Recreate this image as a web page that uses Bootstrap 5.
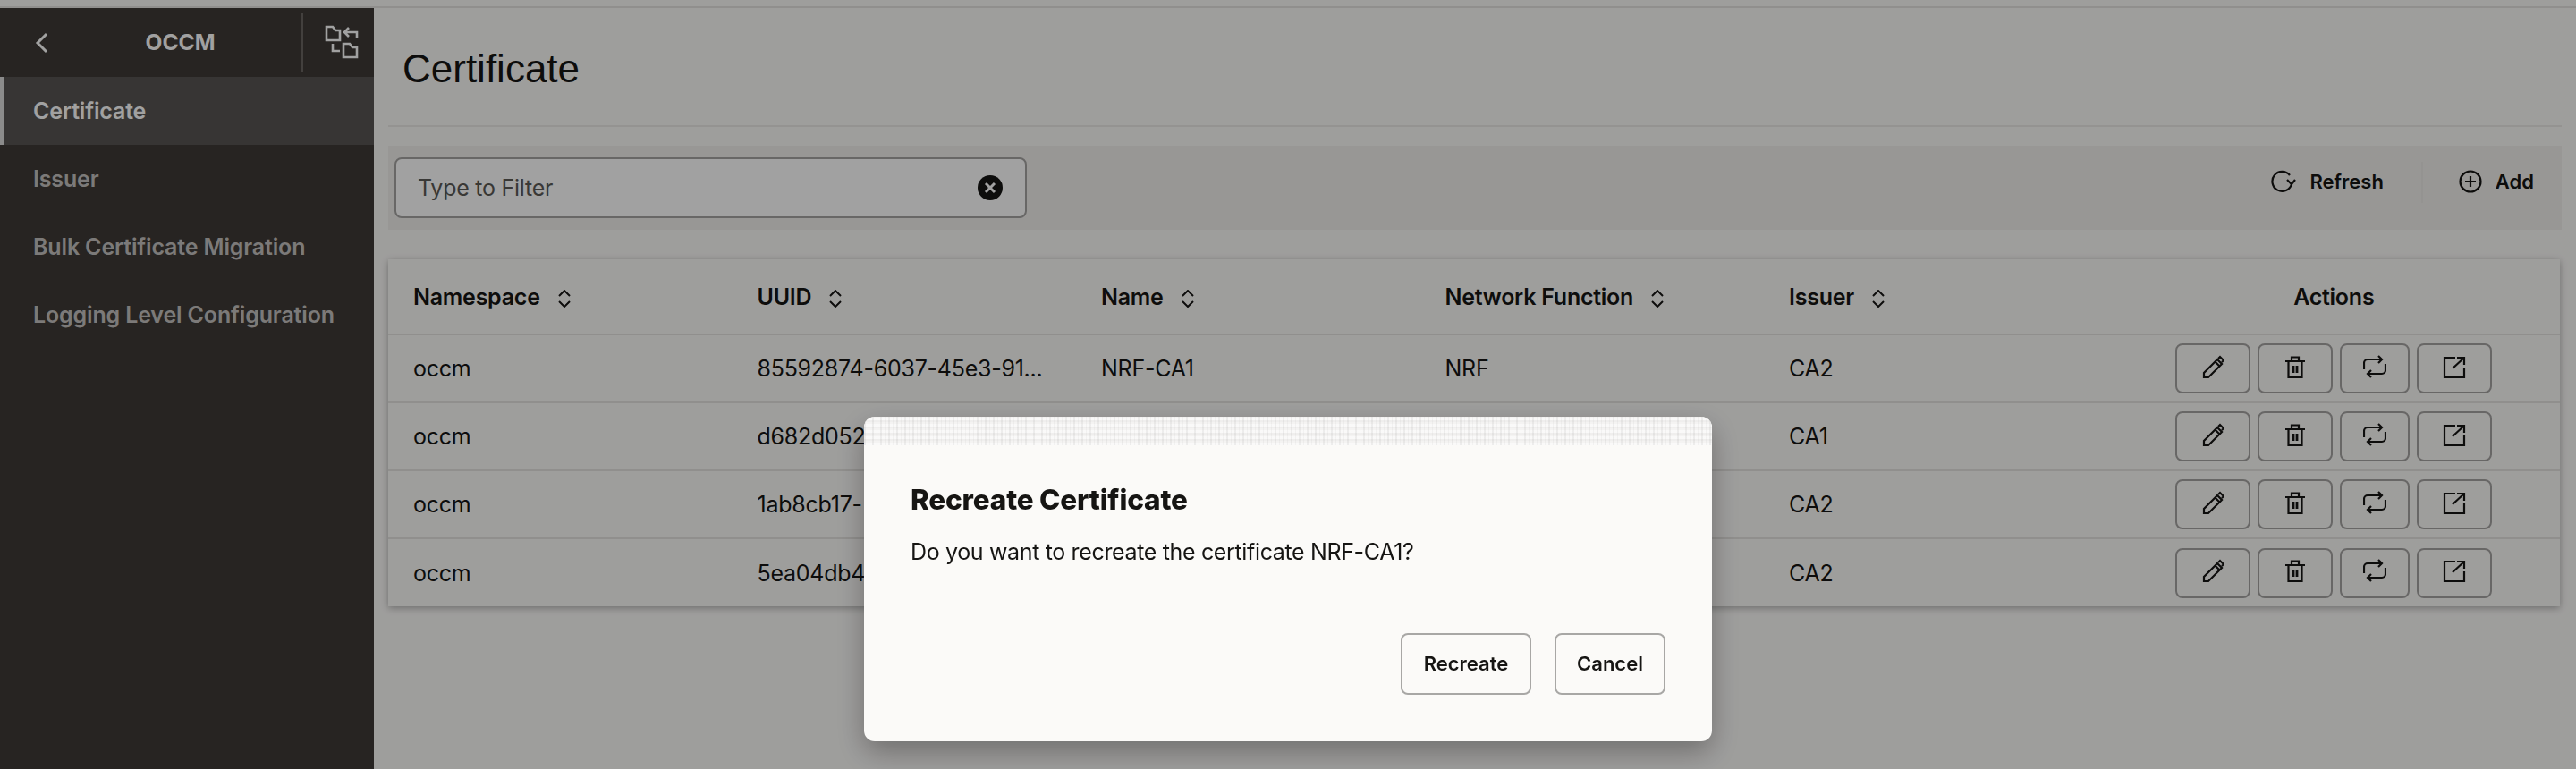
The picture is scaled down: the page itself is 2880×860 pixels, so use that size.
<!DOCTYPE html>
<html lang="en"><head><meta charset="utf-8"><title>Certificate</title>
<link rel="stylesheet" href="https://cdn.jsdelivr.net/npm/bootstrap@5.3.0/dist/css/bootstrap.min.css">
<style>
html,body{height:860px;overflow:hidden}
body{font-family:Inter,"Liberation Sans",sans-serif;background:#fbfaf8;color:#161513;font-size:24px}
.topstrip{height:9px;background:#fbfaf8;border-bottom:2px solid #e4e2df}
.shell{height:851px}
.sidenav{width:418px;background:#3e3a36;flex:none}
.sidehead{height:77px;color:#fff;font-size:24.5px;font-weight:700}
.sideback{width:94px}
.sideswitch{width:81px;height:66px;margin-top:5px;border-left:2px solid #6a6663;padding-left:6px}
.navitem{height:76px;padding-left:37px;padding-top:2px;font-size:25px;letter-spacing:-.006em;font-weight:600;color:#c4c2c0;display:flex;align-items:center}
.navitem.on{background:#575553;color:#fff;border-left:4px solid #ddd;padding-left:33px}
.mainpane{flex:1;padding:0 16px}
.pagetitle{font-family:"Liberation Sans",Arial,sans-serif;font-size:44px;font-weight:400;margin:0;padding:41px 0 0 16px;border-bottom:2px solid #ebe9e6;line-height:54px;height:133px}
.toolbar{margin-top:21px;height:94px;background:#f1efed;padding:13px 7px}
.filterbox{width:707px;height:68px;border:2px solid #a5a4a2;border-radius:8px;padding:0 24px;background:#fff}
.filterph{color:#5b5956;font-size:25px;letter-spacing:-.01em;padding-top:2px}
.tb-btn{font-size:22px;font-weight:600;gap:15px;padding-bottom:14px}
.tb-sep{width:2px;height:46px;background:#ebe9e6;margin:0 40px 12px 42px}
.toolright{padding-right:24px}
.tablecard{margin-top:33px;background:#fbfaf8;box-shadow:0 2px 8px rgba(0,0,0,.3);width:2428px}
.datatable{margin:0;table-layout:fixed;font-size:25px;letter-spacing:-.01em;--bs-table-bg:transparent;--bs-table-color:#161513}
.datatable th{height:84px;font-weight:600;vertical-align:middle;padding:2px 0 0 28px;width:384.5px;border-bottom:2px solid #e4e2df;white-space:nowrap}
.datatable td{height:76px;vertical-align:middle;padding:2px 0 0 28px;border-bottom:2px solid #e4e2df;white-space:nowrap}
.datatable tr:last-child td{border-bottom:0}
.datatable th.actcol{text-align:center;width:auto;padding:2px 0 0 0}
.datatable td.actcol{padding:0}
.sorticon{margin-left:20px;vertical-align:-3px}
.iconbtn{height:56px;border:2px solid #a5a4a2;border-radius:8px;padding:0 0 4px;background:transparent;display:flex;align-items:center;justify-content:center;width:84px}
.iconbtn.narrow{width:78px}
.scrimlayer{position:fixed;inset:0;background:rgba(0,0,0,.37)}
.dialogbox{position:fixed;left:966px;top:466px;width:948px;height:363px;background:#fbfaf8;border-radius:12px;box-shadow:0 12px 32px rgba(0,0,0,.3);overflow:hidden}
.dialogband{height:32px;background-color:#f4f3f2;background-image:repeating-linear-gradient(90deg,rgba(0,0,0,.05) 0 2px,transparent 2px 5px,rgba(0,0,0,.03) 5px 6px,transparent 6px 9px),repeating-linear-gradient(0deg,rgba(255,255,255,.5) 0 3px,transparent 3px 5px,rgba(0,0,0,.02) 5px 7px)}
.dialoginner{padding:41px 52px 52px 52px;height:331px}
.dialogtitle{font-size:31.5px;font-weight:800;margin:0;line-height:40px;letter-spacing:-.006em}
.dialogtext{font-size:25px;letter-spacing:-.014em;margin:20px 0 0;line-height:36px}
.dialogactions{gap:26px}
.dialogbtn{height:69px;border:2px solid #a8a7a5;border-radius:8px;background:transparent;font-size:22px;font-weight:600;color:#161513;padding:0}
.btnrecreate{width:146px}.btncancel{width:124px}
</style></head>
<body>
<div class="topstrip"></div>
<div class="d-flex shell">
 <nav class="sidenav">
  <div class="sidehead d-flex">
   <div class="sideback d-flex align-items-center justify-content-center"><svg width="16" height="24" viewBox="0 0 16 24" fill="none" stroke="currentColor" stroke-width="3"><path d="M13 2 3 12l10 10"/></svg></div>
   <div class="flex-grow-1 text-center align-self-center" style="margin-left:-28px">OCCM</div>
   <div class="sideswitch d-flex align-items-center justify-content-center"><svg width="38" height="38" viewBox="0 0 38 38" fill="none" stroke="currentColor" stroke-width="2.6"><path d="M2 2h7l3 4h5v11H2zM36 14V8H22M27 3l-5 5 5 5M9 21v8h8M21 21h7l3 4h5v11H21z"/></svg></div>
  </div>
  <div class="navitem on">Certificate</div>
  <div class="navitem">Issuer</div>
  <div class="navitem">Bulk Certificate Migration</div>
  <div class="navitem">Logging Level Configuration</div>
 </nav>
 <main class="mainpane">
  <h1 class="pagetitle">Certificate</h1>
  <div class="toolbar d-flex justify-content-between align-items-center">
   <div class="filterbox d-flex align-items-center justify-content-between"><span class="filterph">Type to Filter</span><svg width="30" height="30" viewBox="0 0 30 30"><circle cx="15" cy="15" r="14" fill="#161513"/><path d="M10 10l10 10M20 10 10 20" stroke="#fff" stroke-width="3"/></svg></div>
   <div class="d-flex align-items-center toolright">
    <div class="tb-btn d-flex align-items-center"><svg width="28" height="26" viewBox="0 0 28 26" fill="none" stroke="currentColor" stroke-width="2.2"><path d="M21 6A11 11 0 1 0 23 16M27 11l-4 5-5-5"/></svg>Refresh</div>
    <div class="tb-sep"></div>
    <div class="tb-btn d-flex align-items-center"><svg width="26" height="26" viewBox="0 0 26 26" fill="none" stroke="currentColor" stroke-width="2.2"><circle cx="13" cy="13" r="11.5"/><path d="M13 7v12M7 13h12"/></svg>Add</div>
   </div>
  </div>
  <div class="tablecard">
   <table class="table datatable">
    <thead><tr>
     <th>Namespace<svg class="sorticon" width="14" height="20" viewBox="0 0 14 20" fill="none" stroke="currentColor" stroke-width="2"><path d="M1 7l6-6 6 6M1 13l6 6 6-6"/></svg></th>
     <th>UUID<svg class="sorticon" width="14" height="20" viewBox="0 0 14 20" fill="none" stroke="currentColor" stroke-width="2"><path d="M1 7l6-6 6 6M1 13l6 6 6-6"/></svg></th>
     <th>Name<svg class="sorticon" width="14" height="20" viewBox="0 0 14 20" fill="none" stroke="currentColor" stroke-width="2"><path d="M1 7l6-6 6 6M1 13l6 6 6-6"/></svg></th>
     <th>Network Function<svg class="sorticon" width="14" height="20" viewBox="0 0 14 20" fill="none" stroke="currentColor" stroke-width="2"><path d="M1 7l6-6 6 6M1 13l6 6 6-6"/></svg></th>
     <th>Issuer<svg class="sorticon" width="14" height="20" viewBox="0 0 14 20" fill="none" stroke="currentColor" stroke-width="2"><path d="M1 7l6-6 6 6M1 13l6 6 6-6"/></svg></th>
     <th class="actcol">Actions</th>
    </tr></thead>
    <tbody id="rows"></tbody>
   </table>
  </div>
 </main>
</div>
<div class="scrimlayer"></div>
<div class="dialogbox" role="dialog">
 <div class="dialogband"></div>
 <div class="dialoginner d-flex flex-column">
  <h2 class="dialogtitle">Recreate Certificate</h2>
  <p class="dialogtext">Do you want to recreate the certificate NRF-CA1?</p>
  <div class="d-flex justify-content-end dialogactions mt-auto">
   <button class="dialogbtn btnrecreate">Recreate</button>
   <button class="dialogbtn btncancel">Cancel</button>
  </div>
 </div>
</div>
<script>
const data=[["occm","85592874-6037-45e3-91...","NRF-CA1","NRF","CA2"],["occm","d682d052","","","CA1"],["occm","1ab8cb17-","","","CA2"],["occm","5ea04db4","","","CA2"]];
const icons=[
 ['','<path d="M3 25v-5L18 5l5 5L8 25zM15.5 7.5l5 5M19 4l2-2 4 4-2 2"/>'],
 ['','<path d="M2 7h22M5.5 7v18h15V7M9 7V2.5h8V7"/><path d="M11 12v8M15 12v8" stroke-width="2.8"/>'],
 ['narrow','<path d="M1 16V9a4 4 0 0 1 4-4h16M17 1l4 4-4 4M25 10v7a4 4 0 0 1-4 4H5M9 17l-4 4 4 4"/>'],
 ['','<path d="M14 3H2v22h22V14M16 3h8v8M24 3 11 15"/>']];
document.getElementById('rows').innerHTML=data.map(r=>'<tr>'+r.map(c=>'<td>'+c+'</td>').join('')+'<td class="actcol"><div class="d-flex justify-content-center gap-2">'+icons.map(i=>'<button class="iconbtn '+i[0]+'"><svg width="26" height="27" viewBox="0 0 26 27" fill="none" stroke="#161513" stroke-width="2.2">'+i[1]+'</svg></button>').join('')+'</div></td></tr>').join('');
</script>
<script src="https://cdn.jsdelivr.net/npm/bootstrap@5.3.0/dist/js/bootstrap.bundle.min.js"></script>
</body></html>
